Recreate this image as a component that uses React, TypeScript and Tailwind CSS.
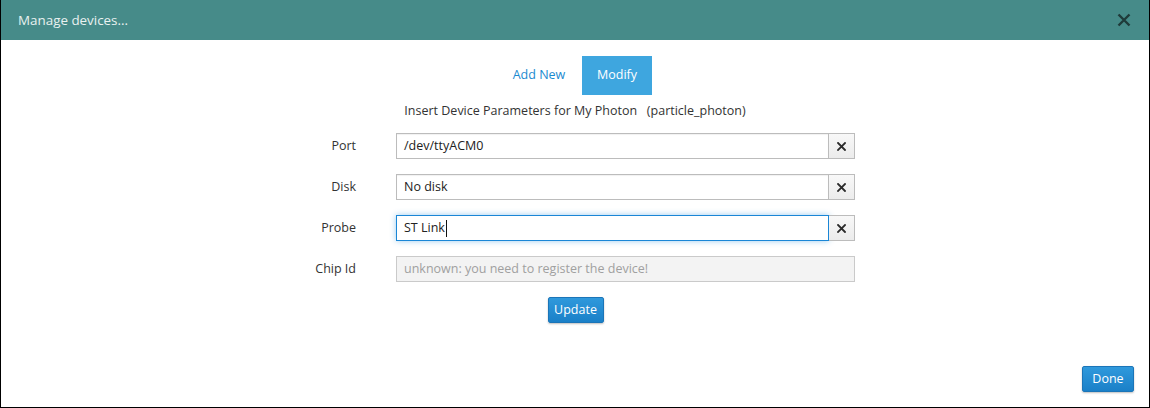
import React from 'react';

const font = { fontFamily: '"Open Sans", "Noto Sans", sans-serif' };

const ClearButton = () => (
  <button className="w-[26px] h-[26px] flex items-center justify-center border border-l-0 border-[#bcbcbc] bg-gradient-to-b from-[#f8f8f8] to-[#ececec]">
    <svg width="9" height="9" viewBox="0 0 9 9">
      <path d="M1 1L8 8M8 1L1 8" stroke="#2b2b2b" strokeWidth="1.8" strokeLinecap="square" />
    </svg>
  </button>
);

interface Field {
  label: string;
  value: string;
  focused?: boolean;
}

const fields: Field[] = [
  { label: 'Port', value: '/dev/ttyACM0' },
  { label: 'Disk', value: 'No disk' },
  { label: 'Probe', value: 'ST Link', focused: true },
];

const App = () => {
  return (
    <div style={font} className="w-[1150px] h-[408px] flex flex-col bg-white border-x border-b border-black overflow-hidden">
      {/* Header */}
      <div className="h-10 shrink-0 bg-[#468b89] flex items-center justify-between pl-[17px] pr-[18px]">
        <span className="text-[13.4px] text-[#e9f1f0]">Manage devices...</span>
        <svg width="14" height="14" viewBox="0 0 14 14">
          <path d="M1.5 1.5L12.5 12.5M12.5 1.5L1.5 12.5" stroke="#1f3b3a" strokeWidth="2.4" />
        </svg>
      </div>

      {/* Body */}
      <div className="flex-1 flex flex-col text-[12.5px]">
        <div className="flex justify-center mt-4 ml-[11px]">
          <div className="w-[60px] h-[39px] flex items-center justify-center text-[#1a8ad0] mr-[13px]">Add New</div>
          <div className="w-[70px] h-[39px] flex items-center justify-center text-white bg-[#3ea6df]">Modify</div>
        </div>

        <div className="text-center text-[#333] mt-[6px] h-[20px] leading-[20px]">
          Insert Device Parameters for My Photon&nbsp;&nbsp;&nbsp;(particle_photon)
        </div>

        <div className="flex flex-col ml-[255px] mt-[12px] gap-[15px]">
          {fields.map((f) => (
            <div key={f.label} className="flex items-center">
              <div className="w-[100px] text-right text-[#333]">{f.label}</div>
              <div className="ml-[40px] flex">
                <div
                  className={`w-[433px] h-[26px] px-[7px] flex items-center text-[#222] bg-white border ${
                    f.focused
                      ? 'border-[#1a86d6] shadow-[0_0_6px_rgba(30,140,220,0.45)]'
                      : 'border-[#bcbcbc] shadow-[inset_0_1px_1px_rgba(0,0,0,0.06)]'
                  }`}
                >
                  {f.value}
                  {f.focused && <span className="inline-block w-px h-[17px] bg-[#111] ml-[1px]" />}
                </div>
                <ClearButton />
              </div>
            </div>
          ))}
          <div className="flex items-center">
            <div className="w-[100px] text-right text-[#333]">Chip Id</div>
            <div className="ml-[40px] w-[459px] h-[26px] px-[7px] flex items-center text-[#a0a0a0] bg-[#f3f3f3] border border-[#cacaca]">
              unknown: you need to register the device!
            </div>
          </div>
        </div>

        <div className="flex justify-center mt-[15px] ml-[1px]">
          <button className="w-[56px] h-[26px] text-white rounded-[2px] border border-[#1b75b8] bg-gradient-to-b from-[#2f99dc] to-[#1a80c8] shadow-[0_1px_2px_rgba(0,0,0,0.25)]">
            Update
          </button>
        </div>

        <div className="flex-1" />
        <div className="flex justify-end pr-[15px] pb-[15px]">
          <button className="w-[52px] h-[26px] text-white rounded-[2px] border border-[#1b75b8] bg-gradient-to-b from-[#2f99dc] to-[#1a80c8] shadow-[0_1px_2px_rgba(0,0,0,0.25)]">
            Done
          </button>
        </div>
      </div>
    </div>
  );
};

export default App;
